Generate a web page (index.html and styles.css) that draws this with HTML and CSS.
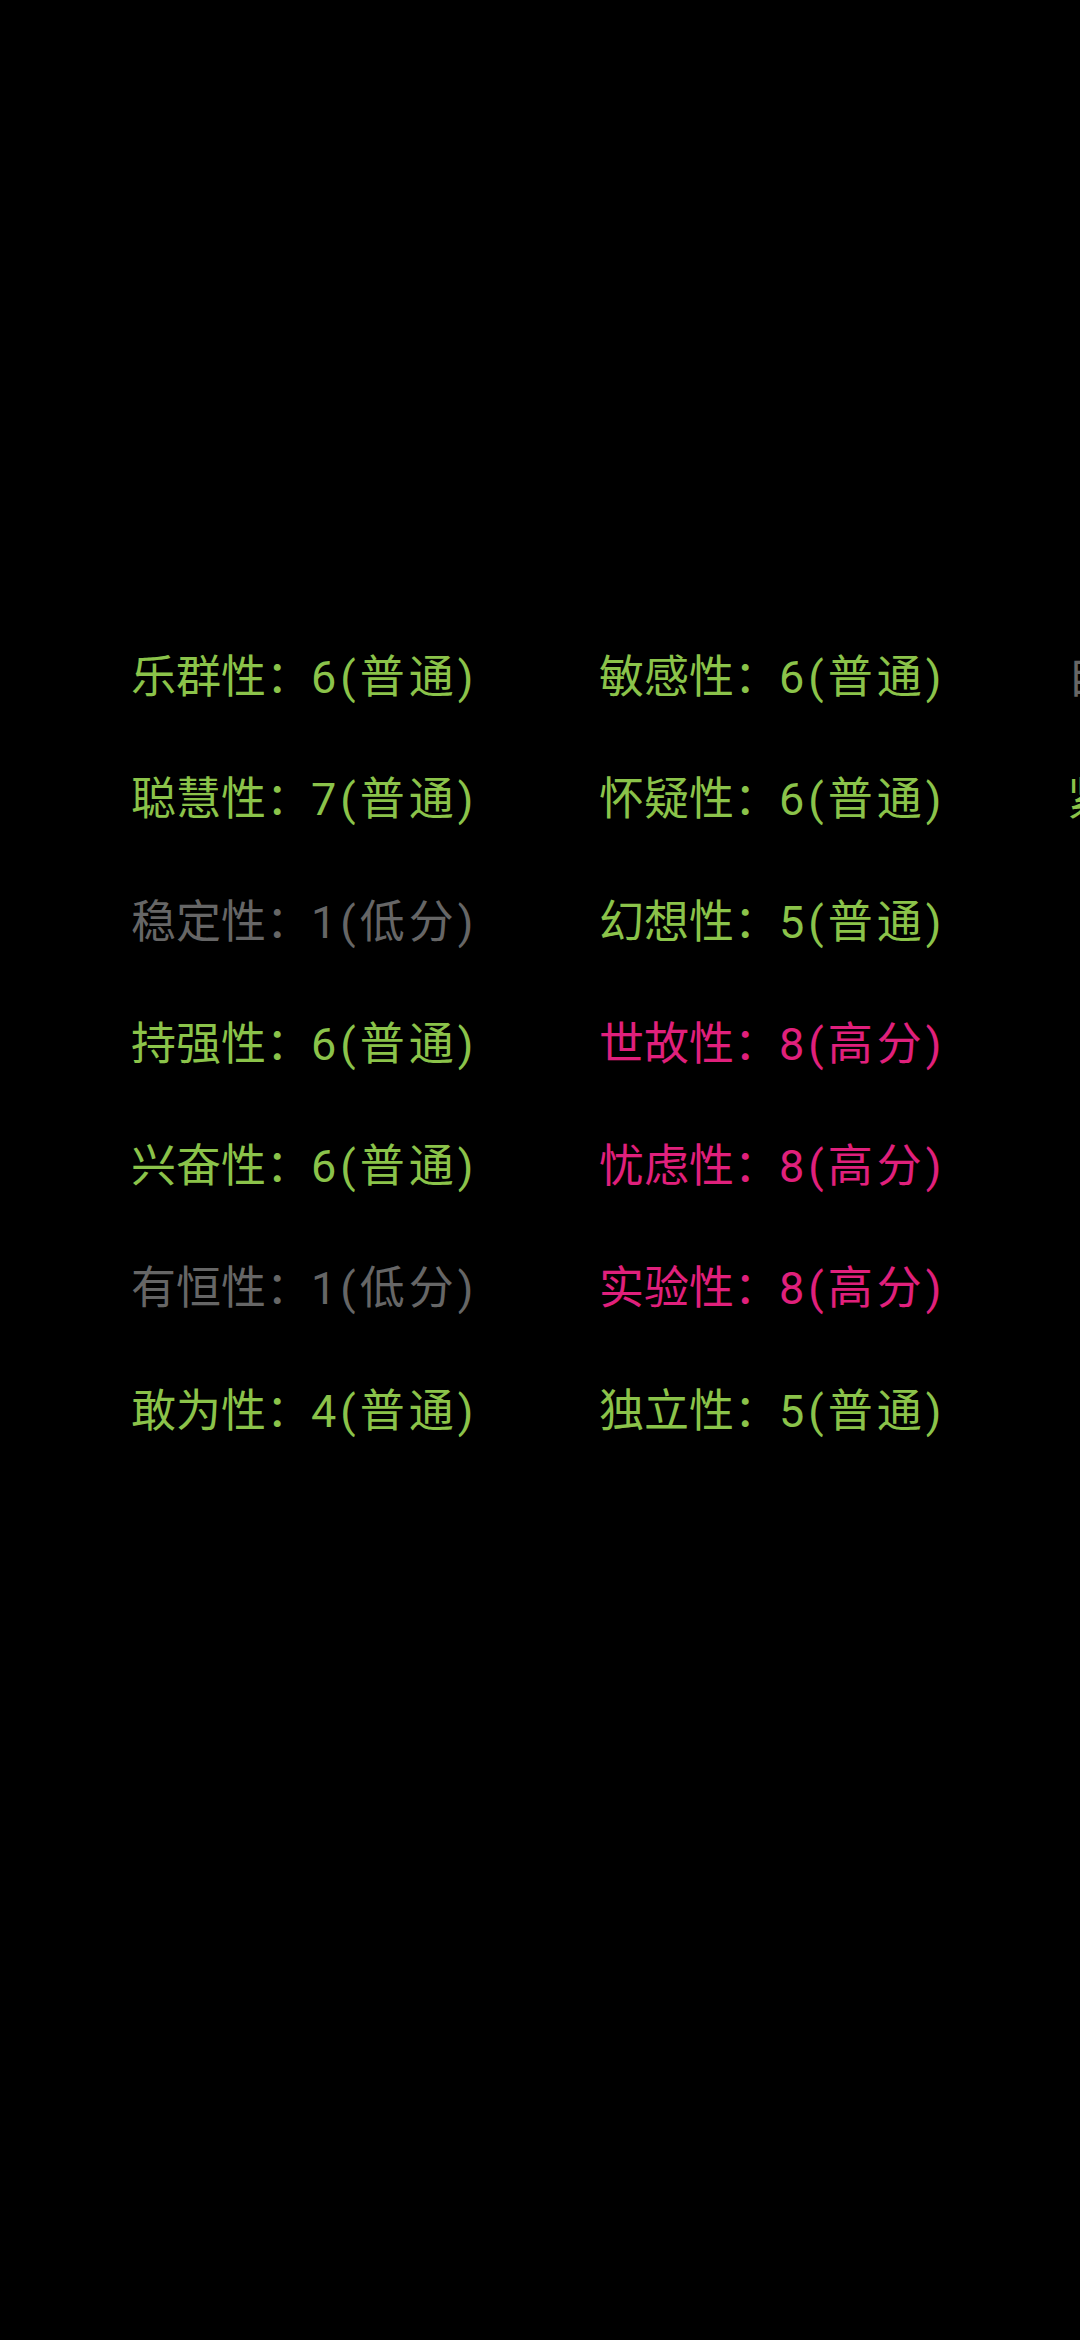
FILE: index.html
```html
<!DOCTYPE html>
<html lang="zh">
<head>
<meta charset="utf-8">
<link rel="stylesheet" href="styles.css">
</head>
<body>
<div class="board">
  <div class="grid">
    <div class="item ok">乐群性：<span class="val">6(普通)</span></div>
    <div class="item ok">聪慧性：<span class="val">7(普通)</span></div>
    <div class="item low">稳定性：<span class="val">1(低分)</span></div>
    <div class="item ok">持强性：<span class="val">6(普通)</span></div>
    <div class="item ok">兴奋性：<span class="val">6(普通)</span></div>
    <div class="item low">有恒性：<span class="val">1(低分)</span></div>
    <div class="item ok">敢为性：<span class="val">4(普通)</span></div>
    <div class="item ok">敏感性：<span class="val">6(普通)</span></div>
    <div class="item ok">怀疑性：<span class="val">6(普通)</span></div>
    <div class="item ok">幻想性：<span class="val">5(普通)</span></div>
    <div class="item high">世故性：<span class="val">8(高分)</span></div>
    <div class="item high">忧虑性：<span class="val">8(高分)</span></div>
    <div class="item high">实验性：<span class="val">8(高分)</span></div>
    <div class="item ok">独立性：<span class="val">5(普通)</span></div>
    <div class="item low">自律性：<span class="val">2(低分)</span></div>
    <div class="item ok">紧张性：<span class="val">6(普通)</span></div>
  </div>
</div>
</body>
</html>
```
FILE: styles.css
```css
html, body {
  margin: 0;
  padding: 0;
  background: #000;
  width: 1080px;
  height: 2340px;
  overflow: hidden;
}
.board {
  width: 1080px;
  height: 2340px;
  overflow: hidden;
  padding: 613px 0 0 131px;
  box-sizing: border-box;
}
.grid {
  display: grid;
  grid-template-columns: repeat(3, 468px);
  grid-template-rows: repeat(7, 122.3px);
  grid-auto-flow: column;
  width: max-content;
}
.item {
  font-family: "Noto Sans CJK SC", "Noto Sans", sans-serif;
  font-size: 45px;
  line-height: 122.3px;
  white-space: nowrap;
}
.val {
  font-family: Roboto, "Noto Sans CJK SC", sans-serif;
  letter-spacing: 4px;
}
.ok { color: #8bc34a; }
.low { color: #666666; }
.high { color: #e0207c; }
```
